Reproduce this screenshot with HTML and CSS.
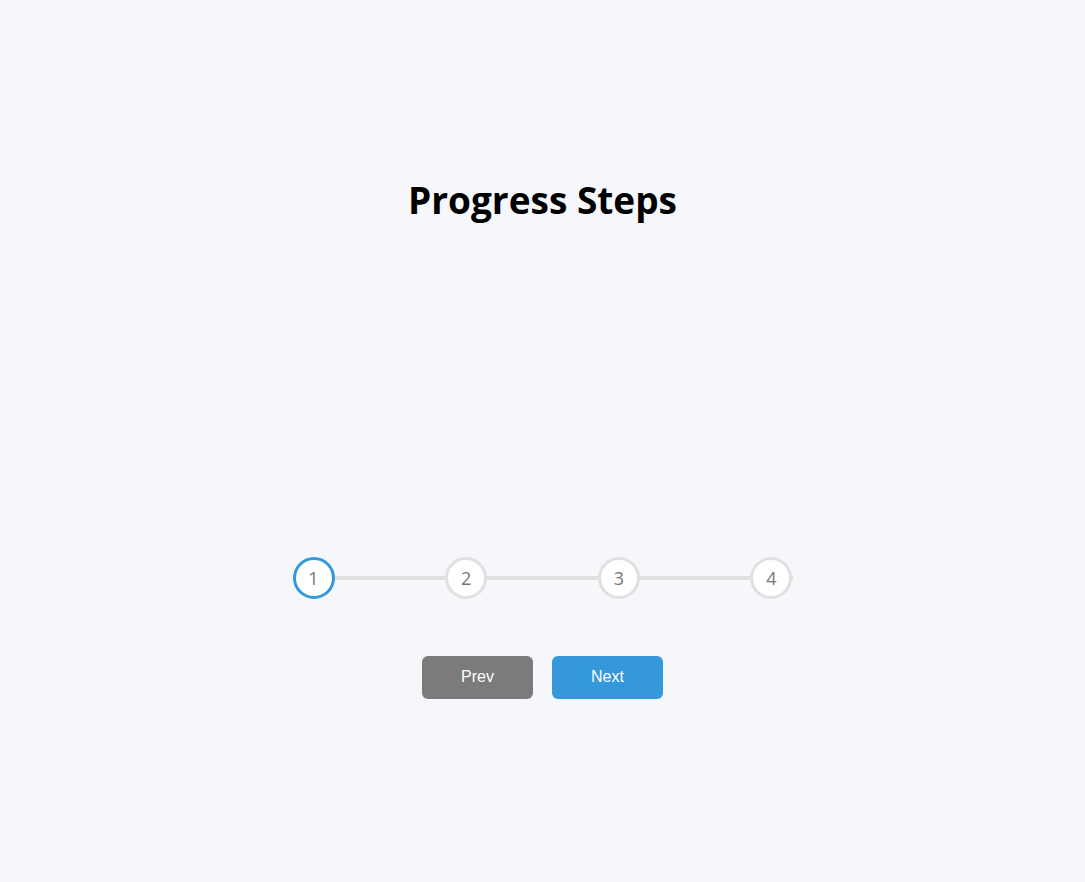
FILE: index.html
```html
<!DOCTYPE html>
<html lang="en">
<head>
<meta charset="UTF-8">
<title>Progress Steps</title>
<link rel="stylesheet" href="styles.css">
</head>
<body>
  <main class="page">
    <h1 class="title">Progress Steps</h1>
    <div class="container">
      <div class="progress-container">
        <div class="progress"></div>
        <div class="circle active">1</div>
        <div class="circle">2</div>
        <div class="circle">3</div>
        <div class="circle">4</div>
      </div>
      <div class="buttons">
        <button class="btn btn-prev" disabled>Prev</button>
        <button class="btn btn-next">Next</button>
      </div>
    </div>
  </main>
</body>
</html>
```

FILE: styles.css
```css
* { box-sizing: border-box; }

body {
  margin: 0;
  background-color: #f6f7fb;
  font-family: "Open Sans", "DejaVu Sans", sans-serif;
  min-height: 100vh;
  overflow: hidden;
}

.page {
  display: flex;
  flex-direction: column;
  align-items: center;
}

.title {
  margin: 172px 0 0;
  font-size: 37px;
  font-weight: 700;
  line-height: 56px;
  color: #000;
}

.container {
  margin-top: 329px;
  display: flex;
  flex-direction: column;
  align-items: center;
}

.progress-container {
  display: flex;
  justify-content: space-between;
  position: relative;
  width: 500px;
  z-index: 0;
}

.progress-container::before {
  content: "";
  background-color: #e0e0e0;
  position: absolute;
  top: 50%;
  left: 0;
  transform: translateY(-50%);
  height: 4px;
  width: 100%;
  z-index: -1;
}

.progress {
  background-color: #3498db;
  position: absolute;
  top: 50%;
  left: 0;
  transform: translateY(-50%);
  height: 4px;
  width: 0%;
  z-index: -1;
}

.circle {
  background-color: #fff;
  color: #777;
  border-radius: 50%;
  width: 42px;
  height: 42px;
  display: flex;
  align-items: center;
  justify-content: center;
  border: 3px solid #e0e0e0;
  font-size: 18px;
}

.circle.active {
  border-color: #3498db;
}

.buttons {
  margin-top: 57px;
  display: flex;
  gap: 19px;
}

.btn {
  width: 111px;
  height: 43px;
  border: 0;
  border-radius: 6px;
  color: #fff;
  font-family: "Liberation Sans", Arial, sans-serif;
  font-size: 16px;
  background-color: #3498db;
  padding: 0 0 2px;
}

.btn-prev {
  background-color: #7b7b7b;
}
```
